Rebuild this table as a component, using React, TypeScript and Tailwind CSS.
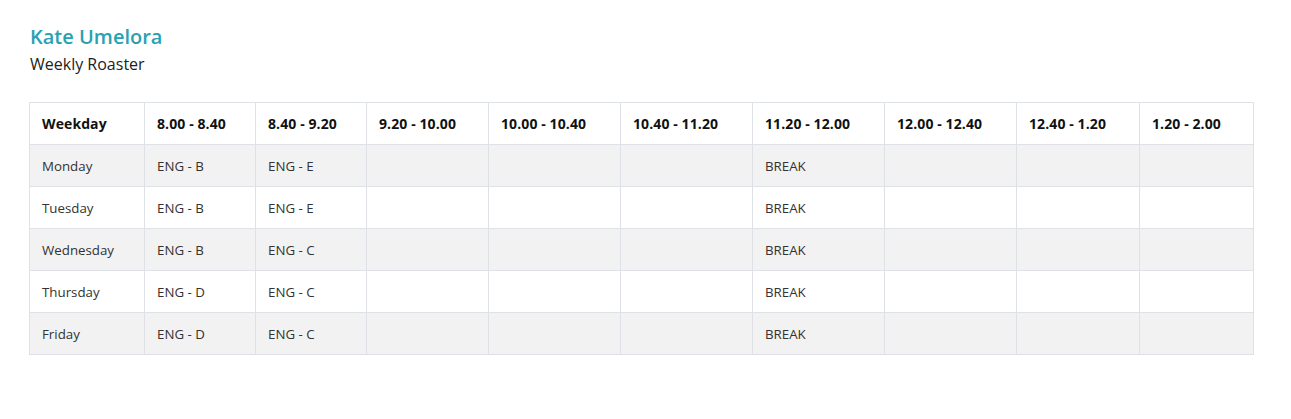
const cols = [
    { label: 'Weekday', w: 'w-[115px]' },
    { label: '8.00 - 8.40', w: 'w-[111px]' },
    { label: '8.40 - 9.20', w: 'w-[111px]' },
    { label: '9.20 - 10.00', w: 'w-[122px]' },
    { label: '10.00 - 10.40', w: 'w-[132px]' },
    { label: '10.40 - 11.20', w: 'w-[132px]' },
    { label: '11.20 - 12.00', w: 'w-[132px]' },
    { label: '12.00 - 12.40', w: 'w-[132px]' },
    { label: '12.40 - 1.20', w: 'w-[123px]' },
    { label: '1.20 - 2.00', w: 'w-[114px]' },
]

const rows = [
    ['Monday', 'ENG - B', 'ENG - E', '', '', '', 'BREAK', '', '', ''],
    ['Tuesday', 'ENG - B', 'ENG - E', '', '', '', 'BREAK', '', '', ''],
    ['Wednesday', 'ENG - B', 'ENG - C', '', '', '', 'BREAK', '', '', ''],
    ['Thursday', 'ENG - D', 'ENG - C', '', '', '', 'BREAK', '', '', ''],
    ['Friday', 'ENG - D', 'ENG - C', '', '', '', 'BREAK', '', '', ''],
]

export default function App() {
    return (
        <div className="min-h-[419px] bg-white px-[30px] pt-[23px] font-['Segoe_UI','Open_Sans',sans-serif]">
            <h2 className="text-[20px] leading-[28px] font-semibold text-[#2aa1b3]">Kate Umelora</h2>
            <p className="mt-[2px] text-[16px] leading-[22px] text-[#222]">Weekly Roaster</p>

            <table className="mt-[27px] table-fixed border-collapse w-[1225px] -ml-px text-[13px]">
                <thead>
                    <tr className="h-[42px]">
                        {cols.map((c) => (
                            <th key={c.label} className={`${c.w} border border-[#dee2e6] px-3 text-left text-[14px] font-bold tracking-[0.1px] text-[#111]`}>
                                {c.label}
                            </th>
                        ))}
                    </tr>
                </thead>
                <tbody>
                    {rows.map((r, i) => (
                        <tr key={r[0]} className={`h-[42px] ${i % 2 === 0 ? 'bg-[#f2f2f2]' : 'bg-white'}`}>
                            {r.map((cell, j) => (
                                <td key={j} className="border border-[#dee2e6] px-3 pt-[2px] text-[13.3px] text-[#333]">
                                    {cell}
                                </td>
                            ))}
                        </tr>
                    ))}
                </tbody>
            </table>
        </div>
    )
}
